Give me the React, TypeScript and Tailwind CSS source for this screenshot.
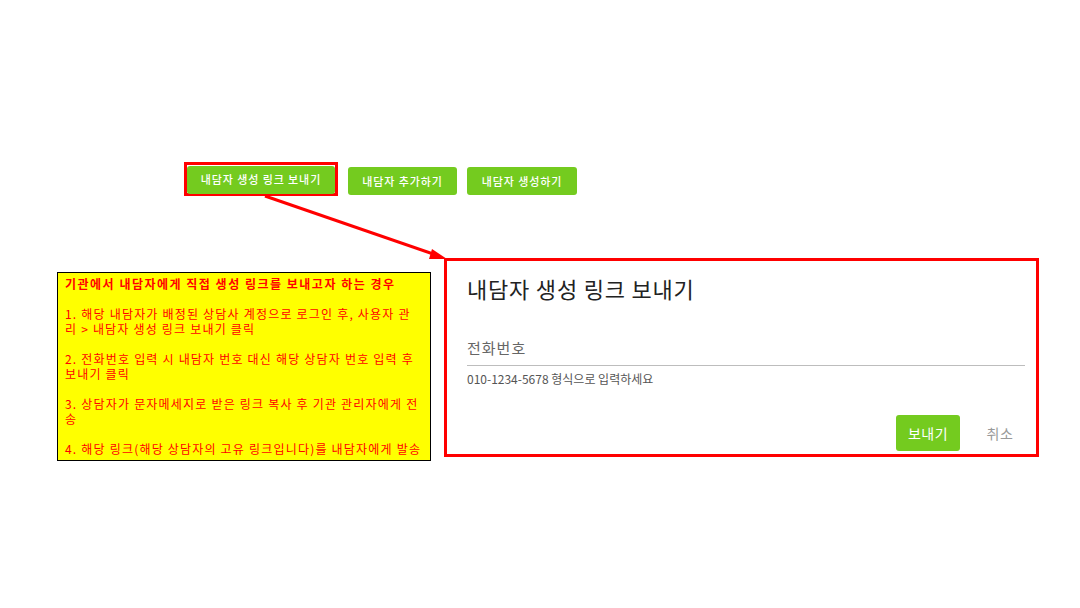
import React from 'react';

const font = "font-['Noto_Sans_CJK_KR','Noto_Sans',sans-serif]";

// 상단 버튼
const TopButton = ({ label, w }: { label: string; w: string }) => (
  <button className={`${w} h-[28px] rounded-[3px] bg-[#74cb1f] text-white text-[11px] font-medium tracking-[0.9px] leading-none whitespace-nowrap`}>
    {label}
  </button>
);

// 빨간 화살표 (주석)
const Arrow = () => (
  <svg className="absolute left-0 top-0 pointer-events-none" width="1080" height="608">
    <line x1="265" y1="196" x2="436" y2="255" stroke="#ff0000" strokeWidth="3" />
    <polygon points="447,259 432,249 429,259" fill="#ff0000" />
  </svg>
);

const notes = [
  ['1. 해당 내담자가 배정된 상담사 계정으로 로그인 후, 사용자 관', '리 > 내담자 생성 링크 보내기 클릭'],
  ['2. 전화번호 입력 시 내담자 번호 대신 해당 상담자 번호 입력 후', '보내기 클릭'],
  ['3. 상담자가 문자메세지로 받은 링크 복사 후 기관 관리자에게 전', '송'],
  ['4. 해당 링크(해당 상담자의 고유 링크입니다)를 내담자에게 발송'],
];

export default function App() {
  return (
    <div className={`relative w-[1080px] h-[608px] bg-white overflow-hidden ${font}`}>
      {/* 버튼 영역 */}
      <div className="flex items-start pl-[184px] pt-[162px]">
        <div className="border-[3px] border-[#ff0000] w-[154px] h-[34px]">
          <TopButton label="내담자 생성 링크 보내기" w="w-[148px]" />
        </div>
        <div className="flex gap-[10px] ml-[10px] mt-[5px]">
          <TopButton label="내담자 추가하기" w="w-[109px]" />
          <TopButton label="내담자 생성하기" w="w-[110px]" />
        </div>
      </div>

      <div className="flex items-start pl-[57px] mt-[62px]">
        {/* 안내 박스 */}
        <div className="mt-[14px] w-[374px] h-[189px] bg-[#ffff00] border border-black pl-[7px] pt-[3px] text-[#ff0000] text-[12px] leading-[15px] tracking-[1.2px] whitespace-nowrap">
          <p className="font-bold tracking-[1.5px]">기관에서 내담자에게 직접 생성 링크를 보내고자 하는 경우</p>
          {notes.map((lines) => (
            <div key={lines[0]} className="mt-[15px]">
              {lines.map((l) => (
                <p key={l}>{l}</p>
              ))}
            </div>
          ))}
        </div>

        {/* 모달 */}
        <div className="ml-[13px] w-[595px] h-[199px] border-[3px] border-[#ff0000] bg-white pl-[20px] pr-[11px] pt-[12px] flex flex-col">
          <h2 className="text-[22px] leading-[30px] text-[#222] font-normal tracking-[0.8px]">내담자 생성 링크 보내기</h2>
          <div className="mt-[34px] border-b border-[#bdbdbd] pb-[6px]">
            <p className="text-[15px] leading-[22px] text-[#666] tracking-[1px]">전화번호</p>
          </div>
          <p className="mt-[5px] text-[12px] leading-[16px] text-[#555]">010-1234-5678 형식으로 입력하세요</p>
          <div className="mt-[28px] flex justify-end">
            <button className="w-[64px] h-[36px] rounded-[3px] bg-[#74cb1f] text-white text-[14px] tracking-[0.5px]">
              보내기
            </button>
            <button className="ml-[11px] w-[54px] h-[36px] pl-[4px] text-[14px] text-[#999] tracking-[0.5px]">취소</button>
          </div>
        </div>
      </div>

      <Arrow />
    </div>
  );
}
